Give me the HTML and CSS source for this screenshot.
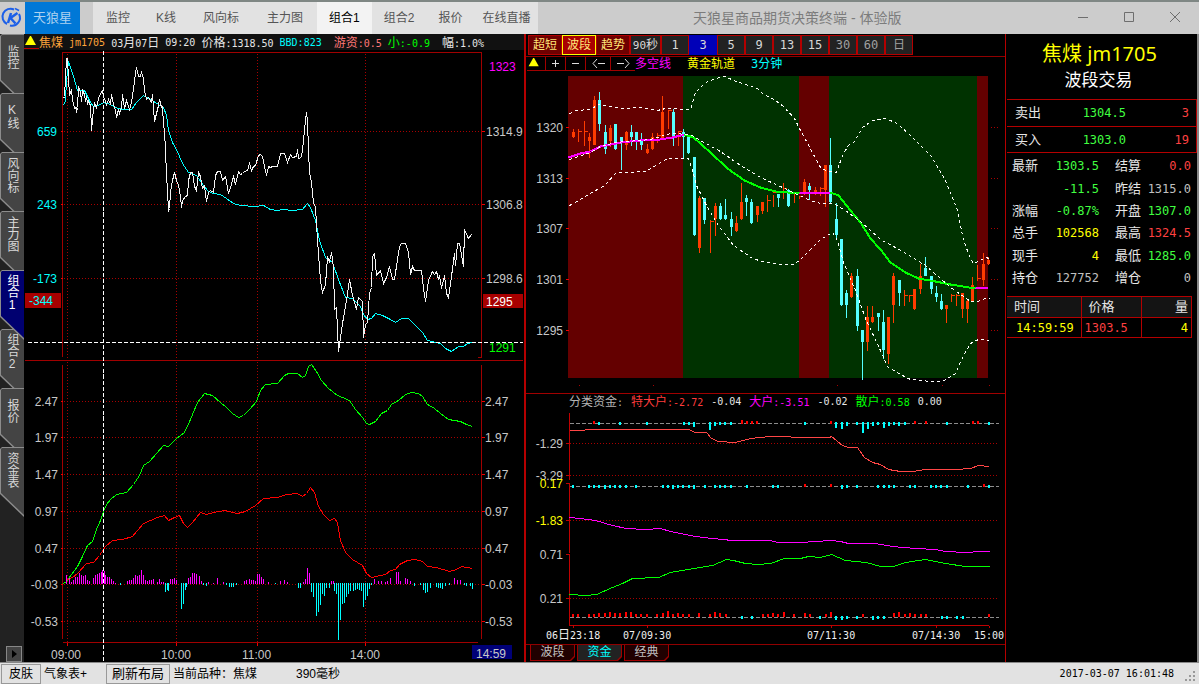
FILE: index.html
```html
<!DOCTYPE html>
<html lang="zh-CN">
<head>
<meta charset="utf-8">
<title>天狼星商品期货决策终端 - 体验版</title>
<link rel="stylesheet" href="styles.css">
</head>
<body>
<div class="app">
  <header class="titlebar">
    <svg class="logo" viewBox="0 0 24 32" aria-hidden="true">
      <g fill="none" stroke="#1c5fe8">
        <path d="M14 7.500A8 8 0 0 0 7 22" stroke-width="2"/>
        <path d="M19 12a8 8 0 0 1-9 11.500" stroke-width="2"/>
        <path d="M15 6.500l4 2" stroke-width="1.500"/>
        <path d="M11 11l-3 10M17.500 11l-7 5 5 5.500" stroke-width="2.500"/>
      </g>
    </svg>
    <button class="brand">天狼星</button>
    <nav class="menu">
      <button>监控</button>
      <button>K线</button>
      <button class="broad">风向标</button>
      <button class="broad">主力图</button>
      <button class="narrow active">组合1</button>
      <button class="narrow">组合2</button>
      <button class="narrow">报价</button>
      <button class="last">在线直播</button>
    </nav>
    <h1>天狼星商品期货决策终端 - 体验版</h1>
    <div class="window-controls">
      <button aria-label="最小化"><svg viewBox="0 0 12 12"><path d="M1 6.500h10"/></svg></button>
      <button aria-label="最大化"><svg viewBox="0 0 12 12"><path d="M1.500 1.500h9v9h-9z"/></svg></button>
      <button aria-label="关闭"><svg viewBox="0 0 12 12"><path d="M1 1l10 10M11 1L1 11"/></svg></button>
    </div>
  </header>

  <main class="workspace">
    <nav class="side">
      <button class="side-tab"><span>监控</span></button>
      <button class="side-tab"><span>K线</span></button>
      <button class="side-tab"><span>风向标</span></button>
      <button class="side-tab"><span>主力图</span></button>
      <button class="side-tab active"><span>组合1</span></button>
      <button class="side-tab"><span>组合2</span></button>
      <button class="side-tab"><span>报价</span></button>
      <button class="side-tab"><span>资金表</span></button>
      <button class="side-more" aria-label="更多"><svg viewBox="0 0 8 10"><path d="M2 1l5 4-5 4z"/></svg></button>
    </nav>

    <section class="panel trend">
      <div class="info">
        <svg class="flag" viewBox="0 0 15 16"><path d="M1 11h11L7 2H6z" fill="#ff0"/><path d="M0 14.500h15" stroke="#c00000" stroke-width="1"/></svg>
        <span class="orange">焦煤</span>
        <span class="orange n">jm1705</span>
        <span><i class="n">03</i>月<i class="n">07</i>日</span>
        <span class="n">09:20</span>
        <span>价格<i class="n">:1318.50</i></span>
        <span class="cyan n gap-after">BBD:823</span>
        <span class="rose">游资<i class="n">:0.5</i></span>
        <span class="green gap-after">小<i class="n">:-0.9</i></span>
        <span>幅<i class="n">:1.0%</i></span>
      </div>
      <svg class="chart trend-chart" viewBox="24 50 500 612">
        <g class="crisp" transform="translate(.5 .5)">
          <path class="grid" d="M67 53V359M176 53V359M257 53V359M365 53V359M67 361V641M176 361V641M257 361V641M365 361V641M63 131H481M63 204H481M63 278H481M63 401H481M63 437H481M63 474H481M63 511H481M63 548H481M63 584H481M63 621H481"/>
          <path class="axis" d="M24 360H522M62 356V52H481V357H477M62 364V638M481 364V638M62 642H477"/>
          <path class="tick" d="M60 131h2M60 204h2M60 278h2M60 401h2M60 437h2M60 474h2M60 511h2M60 548h2M60 584h2M60 621h2M481 131h3M481 204h3M481 278h3M481 401h3M481 437h3M481 474h3M481 511h3M481 548h3M481 584h3M481 621h3M67 642v3M176 642v3M257 642v3M365 642v3"/>
          <polyline class="line cyan-line" points="63,105 65,100 66,80 68,61 70,67 73,76 77,90 84,90 90,102 93,106 98,105 103,102 110,104 115,107 122,109 131,109 136,102 143,95 146,97 150,99 158,104 163,107 166,115 168,130 172,142 176,149 182,163 188,172 196,175 203,185 208,191 213,193 220,194 226,198 233,203 240,205 255,206 263,205 270,209 277,210 283,209 292,210 302,209 307,203 310,207 315,220 319,240 325,257 332,262 338,279 345,297 352,298 360,306 363,314 367,319 371,318 375,313 382,315 390,319 395,322 401,318 408,318 415,325 422,332 427,340 440,343 445,348 451,351 458,346 463,346 467,343 472,342"/>
          <polyline class="line white-line" points="63,98 64,96 66,58 67,58 68,78 69,94 71,90 72,99 74,108 76,107 76,112 77,107 78,86 80,92 81,101 82,90 84,94 85,101 86,96 87,103 88,101 90,105 91,130 93,108 94,103 96,107 98,98 100,93 102,90 103,96 105,101 106,104 108,99 110,104 111,94 113,104 115,110 116,117 118,109 119,113 121,107 122,94 124,108 126,100 128,106 129,109 131,102 133,88 135,73 136,67 138,76 140,76 141,72 143,78 144,90 146,99 148,97 151,102 152,94 154,121 156,113 158,105 159,99 161,107 162,106 163,125 164,130 165,150 166,175 167,190 168,211 169,208 170,192 172,180 174,172 176,180 178,185 180,196 181,207 182,200 185,196 187,195 188,180 190,172 192,172 194,186 196,190 198,172 200,176 202,188 204,185 206,201 208,192 210,190 213,192 215,175 217,171 220,171 222,180 225,176 228,193 230,187 233,176 235,184 238,171 240,174 242,173 244,171 247,170 249,163 251,170 253,166 255,165 258,155 260,154 262,156 264,166 266,175 268,166 270,167 272,166 277,166 280,153 284,153 287,162 290,154 292,157 296,156 297,149 298,158 301,157 303,140 305,120 306,112 307,120 308,150 309,172 311,182 313,202 315,207 317,240 320,280 322,292 325,284 327,257 329,261 331,252 333,267 334,309 336,307 338,351 342,323 346,300 349,279 352,295 356,309 358,297 362,301 363,337 365,324 367,322 369,293 371,287 372,256 374,253 376,275 380,270 383,283 386,277 389,266 392,279 394,279 399,246 401,243 405,243 408,252 410,274 412,266 414,270 421,270 423,288 425,301 428,280 432,271 434,274 436,271 438,279 439,275 441,288 444,275 446,293 448,297 451,276 454,253 455,265 457,243 459,243 463,266 464,229 468,238 471,234"/>
          <polyline class="line green-line" points="63,583 66,581 71,574 77,566 82,556 87,545 92,541 96,529 100,520 103,511 106,504 110,499 116,494 126,492 133,484 139,475 143,465 149,461 156,453 163,445 168,446 176,438 184,432 190,419 197,402 204,393 212,395 220,402 226,407 232,413 238,417 243,415 249,409 256,401 260,390 265,384 277,383 284,375 288,373 297,373 302,377 305,375 308,366 311,364 316,371 321,380 328,388 337,395 342,397 349,400 355,409 362,417 366,423 369,424 375,421 381,413 387,410 391,404 398,400 405,394 411,392 418,393 422,396 427,404 434,408 440,413 448,419 460,421 466,424 472,426"/>
          <polyline class="line red-line" points="67,579 72,577 77,573 86,563 93,562 99,555 105,546 112,540 122,539 132,536 137,530 143,523 150,520 157,517 164,515 168,520 174,517 179,515 183,523 187,527 192,522 200,512 206,514 213,512 224,510 237,513 245,511 255,505 263,498 277,497 286,494 297,493 302,496 306,493 310,487 314,492 318,506 323,514 329,520 334,518 337,522 340,540 345,552 352,559 362,565 366,573 371,577 385,574 390,570 395,569 399,564 407,560 415,559 422,561 427,566 436,567 449,571 456,569 461,566 472,568"/>
          <path class="line magenta-line" d="M66 583v-9M69 583v-6M71 583v-2M73 583v-4M75 583v-7M77 583v-7M79 583v-11M81 583v-9M83 583v-8M85 583v-9M87 583v-4M89 583v-3M93 583v-6M95 583v-9M97 583v-10M99 583v-11M101 583v-12M102 583v-14M104 583v-13M105 583v-9M107 583v-7M109 583v-7M111 583v-5M113 583v-3M115 583v-1M127 583v-3M129 583v-4M131 583v-4M133 583v-6M135 583v-9M137 583v-8M139 583v-9M141 583v-14M143 583v-9M145 583v-4M147 583v-3M149 583v-4M151 583v-4M153 583v-5M157 583v-2M159 583v-5M161 583v-2M163 583v-2M170 583v-5M172 583v-5M174 583v-6M176 583v-4M188 583v-6M190 583v-7M192 583v-11M194 583v-11M196 583v-10M199 583v-8M201 583v-3M208 583v-2M213 583v-1M217 583v-6M223 583v-2M244 583v-3M246 583v-4M249 583v-5M251 583v-4M253 583v-4M255 583v-3M257 583v-10M259 583v-10M261 583v-7M263 583v-5M268 583v-2M280 583v-3M284 583v-4M287 583v-2M303 583v-2M305 583v-5M307 583v-16M309 583v-11M331 583v-3M333 583v-3M374 583v-5M378 583v-3M381 583v-3M385 583v-2M387 583v-3M390 583v-6M396 583v-12M398 583v-12M400 583v-3M405 583v-6M407 583v-5M410 583v-3M454 583v-6M457 583v-4M460 583v-4"/>
          <path class="line cyan-line" d="M120 582v2M165 582v9M167 582v7M168 582v8M181 582v26M183 582v21M185 582v7M186 582v4M203 582v2M206 582v3M226 582v2M229 582v4M231 582v4M233 582v4M236 582v2M275 582v1M298 582v5M300 582v5M311 582v9M313 582v14M316 582v33M318 582v29M320 582v22M322 582v11M324 582v13M326 582v5M329 582v5M334 582v8M336 582v11M338 582v57M340 582v37M342 582v21M344 582v20M346 582v14M348 582v11M350 582v8M353 582v8M355 582v7M357 582v6M359 582v7M361 582v8M363 582v24M365 582v17M367 582v13M369 582v6M371 582v2M414 582v3M420 582v2M423 582v7M425 582v10M427 582v9M430 582v5M436 582v4M438 582v5M440 582v5M442 582v6M445 582v3M449 582v2M464 582v2M466 582v3M470 582v3M472 582v6"/>
          <path class="cross" d="M103 50V661M27 342H522"/>
        </g>
        <rect x="25" y="293" width="36" height="15" fill="#a80000"/>
        <rect x="483" y="294" width="40" height="14" fill="#a80000"/>
        <rect x="472" y="645" width="40" height="14" fill="#000078"/>
        <g class="label cyan">
          <text x="37" y="136">659</text><text x="37" y="209">243</text><text x="33" y="283">-173</text><text x="29" y="305">-344</text>
        </g>
        <g class="label end">
          <text x="58" y="406">2.47</text><text x="58" y="442">1.97</text><text x="58" y="479">1.47</text><text x="58" y="516">0.97</text><text x="58" y="553">0.47</text><text x="58" y="589">-0.03</text><text x="58" y="626">-0.53</text>
        </g>
        <g class="label">
          <text x="489" y="71" class="magenta">1323</text>
          <text x="486" y="136">1314.9</text><text x="486" y="209">1306.8</text><text x="486" y="283">1298.6</text>
          <text x="486" y="306" class="white">1295</text><text x="489" y="352" class="green">1291</text>
          <text x="485" y="406">2.47</text><text x="485" y="442">1.97</text><text x="485" y="479">1.47</text><text x="485" y="516">0.97</text><text x="485" y="553">0.47</text><text x="485" y="589">-0.03</text><text x="485" y="626">-0.53</text>
          <text x="51" y="659">09:00</text><text x="161" y="659">10:00</text><text x="242" y="659">11:00</text><text x="350" y="659">14:00</text><text x="476" y="658">14:59</text>
        </g>
      </svg>
    </section>

    <section class="panel candle">
      <div class="periods">
        <button class="hot">超短</button><button class="hot chosen">波段</button><button class="hot">趋势</button><button class="sec"><i class="m">90</i>秒</button><button class="m">1</button><button class="m on">3</button><button class="m">5</button><button class="m">9</button><button class="m">13</button><button class="m">15</button><button class="m dim">30</button><button class="m dim">60</button><button class="dim">日</button>
      </div>
      <div class="tools">
        <svg class="flag" viewBox="0 0 18 14"><path d="M1 10h11L7 1H6z" fill="#ff0"/></svg>
        <button aria-label="放大"><svg viewBox="0 0 9 9"><path d="M1 4.500h7M4.500 1v7"/></svg></button>
        <button aria-label="缩小"><svg viewBox="0 0 9 9"><path d="M1 4.500h7"/></svg></button>
        <button class="move" aria-label="左移"><svg viewBox="0 0 13 9"><path d="M5 0L1 4.500 5 9M6 4.500h7"/></svg></button>
        <button class="move" aria-label="右移"><svg viewBox="0 0 13 9"><path d="M0 4.500h7M8 0l4 4.500L8 9"/></svg></button>
        <span class="tool-name magenta">多空线</span>
        <span class="tool-name yellow">黄金轨道</span>
        <span class="tool-name cyan"><i class="m">3</i>分钟</span>
      </div>
      <svg class="chart candle-chart" viewBox="526 72 479 321">
        <path d="M568 76h115v302H568zM799 76h30v302h-30zM977 76h11v302h-11z" fill="#640000"/>
        <path d="M683 76h116v302H683zM829 76h148v302H829z" fill="#003200"/>
        <g class="crisp" transform="translate(.5 .5)">
          <path class="tick" d="M565 127h3M565 178h3M565 228h3M565 279h3M565 330h3"/>
          <path class="grid" d="M990 127h8M990 178h8M990 228h8M990 279h8M990 330h8M578 385h1M652 385h1M836 385h1M941 385h1M988 385h1"/>
          <path class="line up" d="M573 128V137M578 128V141M584 120V145M589 132V157M594 95V144M610 124V146M626 130V149M647 143V153M652 132V149M657 132V142M662 95V138M668 109V128M678 130V145M699 195V252M710 219V252M715 202V235M736 215V231M741 182V219M757 205V221M762 201V213M767 194V211M773 194V206M783 182V198M794 191V202M799 195V198M804 178V194M815 186V194M820 186V195M825 164V206M851 272V297M867 305V350M872 305V322M888 316V363M893 272V322M904 289V305M909 295V301M914 288V309M920 263V293M946 304V322M951 293V301M956 293V305M962 292V317M967 299V322M972 276V301M977 264V280M983 252V285M988 256V264M577 131h4M583 131h4M656 135h4M667 110h4M677 131h4M709 221h4M766 200h4M772 192h4M782 188h4M793 192h4M798 196h4M819 188h4M903 295h4M908 295h4M950 295h4M955 295h4M976 278h4"/>
          <path class="body up" d="M573 131V136M589 136V140M594 99V144M610 127V140M626 131V144M647 148V152M652 136V148M662 111V137M699 197V247M715 205V218M736 222V230M741 201V218M757 205V214M762 201V210M804 181V193M815 189V193M825 164V189M851 275V296M867 316V341M872 316V321M888 316V353M893 275V304M914 288V308M920 275V288M946 304V308M962 292V308M967 300V308M972 284V300M983 263V279M988 259V263"/>
          <path class="line down" d="M599 91V130M605 124V153M615 123V149M621 136V169M631 124V145M636 131V149M641 132V149M673 108V145M683 128V157M688 136V153M694 156V235M704 197V223M720 202V219M725 198V219M731 211V235M746 194V215M751 198V223M778 193V206M788 188V206M809 182V199M830 137V202M836 202V239M841 238V305M846 289V317M857 268V330M862 329V379M878 312V330M883 309V358M899 279V305M925 256V275M931 275V293M936 285V301M941 293V309"/>
          <path class="body down" d="M599 99V123M605 131V148M615 123V148M621 136V140M631 131V136M636 131V140M641 140V144M673 111V136M683 131V136M688 136V152M694 156V234M704 197V219M720 205V218M725 214V218M731 218V226M746 197V201M751 201V222M778 193V197M788 189V205M809 185V189M830 164V201M836 218V234M841 238V304M846 292V304M857 275V325M862 329V341M878 312V316M883 321V349M899 279V292M925 267V275M931 275V288M936 292V296M941 300V308"/>
          <path class="thick magenta-line" d="M568 157L580 153 590 151 600 146 620 142 640 140 660 139 672 137 684 134M799 193L830 192M975 288L988 287"/>
          <path class="thick green-line" d="M684 134L693 137 710 152 727 168 744 180 760 187 775 191 799 193M830 192L838 195 850 210 860 222 870 238 880 249 890 262 905 272 918 278 935 281 950 284 975 288"/>
          <g class="band">
            <polyline points="569,113 576,110 590,109 598,104 612,106 620,108 640,107 657,110 665,108 690,109 693,99 695,92 705,82 715,78 725,76 733,80 745,84 757,88 762,93 775,100 783,106 794,118 799,128 806,141 820,167 825,170 836,172 842,155 848,145 853,142 862,127 872,120 885,118 897,123 910,135 930,155 945,180 957,210 963,240 970,258 973,263 980,260 985,257 989,258"/>
            <polyline points="569,159 590,152 600,146 615,142 650,139 670,133 690,134 700,140 720,151 740,165 760,177 780,186 799,195 810,200 820,203 833,203 845,210 860,221 880,239 895,247 910,256 925,265 940,278 950,287 963,296 970,301 977,301 985,298 989,298"/>
            <polyline points="569,205 580,199 590,193 604,185 615,173 622,172 645,171 655,165 667,158 688,158 692,170 696,185 706,205 718,225 733,245 752,258 762,261 780,264 793,264 800,259 820,239 832,232 837,240 843,262 855,290 865,318 880,350 887,366 900,374 910,379 930,381 942,381 955,373 963,355 970,343 978,339 989,340"/>
          </g>
        </g>
        <g class="label end">
          <text x="563" y="132">1320</text><text x="563" y="183">1313</text><text x="563" y="233">1307</text><text x="563" y="284">1301</text><text x="563" y="335">1295</text>
        </g>
      </svg>
      <div class="legend">
        <span class="gray">分类资金<i class="n">:</i></span>
        <span class="red">特大户<i class="n">:-2.72</i></span>
        <span class="n">-0.04</span>
        <span class="magenta">大户<i class="n">:-3.51</i></span>
        <span class="n">-0.02</span>
        <span class="green">散户<i class="n">:0.58</i></span>
        <span class="n">0.00</span>
      </div>
      <svg class="chart fund-chart" viewBox="526 411 479 233">
        <g class="crisp" transform="translate(.5 .5)">
          <path class="grid" d="M569 443H998M569 475H998M569 520H998M569 598H998"/>
          <path class="axis bright" d="M569 412V479M565 483H569V552M565 554H569V625H988M565 443h4M565 475h4M565 520h4M565 598h4M573 625v2M647 625v2M831 625v2M936 625v2M989 625v2"/>
          <path class="zero" d="M569 423H998M569 486H998M569 617H998"/>
          <polyline class="line coral-line" points="569,430 580,430 590,429 689,429 694,432 706,432 711,438 718,441 735,442 750,438 770,436 785,436 795,437 829,437 831,436 842,445 848,447 857,447 864,457 872,462 880,464 888,469 900,471 912,471 925,469 955,469 970,468 978,465 989,466"/>
          <polyline class="line magenta-line" points="569,517 580,518 595,520 612,525 626,528 645,529 660,528 670,531 685,534 695,536 712,538 732,540 770,540 777,542 800,542 830,540 840,541 848,543 875,543 892,546 915,548 935,549 945,551 965,552 980,551 989,551"/>
          <polyline class="line green-line" points="569,594 585,595 596,594 612,587 622,583 632,578 658,577 670,572 688,569 700,567 712,565 726,559 733,560 745,563 757,564 770,563 784,558 800,558 808,556 820,557 831,554 845,560 866,562 880,566 893,566 905,562 925,559 945,563 965,566 989,566"/>
        </g>
        <path class="bar cyan-line" d="M599 422v3M620 422v3M647 422v3M684 422v3M689 422v3M694 422v5M710 422v8M715 422v4M720 422v3M725 422v3M731 422v3M805 422v3M836 422v6M842 422v7M847 422v4M857 422v3M863 422v11M868 422v7M873 422v4M878 422v3M884 422v6M889 422v4M894 422v3M899 422v4M905 422v3M947 422v3M989 422v3M573 485v3M589 485v3M594 485v3M599 485v3M605 485v4M610 485v3M615 485v3M620 485v3M626 485v3M636 485v3M663 485v3M668 485v3M673 485v4M678 485v3M683 485v3M689 485v3M694 485v4M705 485v3M715 485v3M720 485v3M725 485v3M731 485v3M747 485v3M773 485v3M778 485v3M842 485v4M847 485v3M857 485v3M878 485v3M884 485v3M889 485v3M894 485v3M910 485v3M915 485v3M931 485v3M936 485v3M941 485v3M947 485v3M968 485v3M989 485v3M742 616v3M752 616v3M820 616v3M836 616v4M842 616v4M847 616v3M857 616v3M873 616v4M878 616v3M884 616v3M942 616v3M947 616v3M957 616v3M963 616v3"/>
        <path class="bar red-line" d="M594 424v-3M742 424v-4M747 424v-3M752 424v-3M757 424v-3M831 424v-3M915 424v-3M926 424v-3M973 424v-3M978 424v-3M805 487v-3M831 487v-3M984 487v-3M573 617v-3M578 617v-3M589 617v-3M594 617v-3M599 617v-4M605 617v-4M610 617v-5M615 617v-4M620 617v-4M626 617v-5M631 617v-5M636 617v-3M641 617v-3M647 617v-3M657 617v-3M663 617v-4M668 617v-6M673 617v-3M678 617v-4M683 617v-3M689 617v-3M699 617v-4M710 617v-3M715 617v-5M720 617v-4M726 617v-3M763 617v-3M768 617v-3M773 617v-4M778 617v-3M784 617v-5M794 617v-3M805 617v-4M810 617v-3M826 617v-3M831 617v-5M863 617v-3M894 617v-4M899 617v-5M905 617v-3M910 617v-4M915 617v-3M921 617v-3M926 617v-3M989 617v-3"/>
        <g class="label end">
          <text x="563" y="448">-1.29</text><text x="563" y="480">-3.29</text>
          <text x="563" y="488" class="yellow">0.17</text><text x="563" y="525" class="yellow">-1.83</text>
          <text x="563" y="559">0.71</text><text x="563" y="603">0.21</text>
        </g>
        <g class="time">
          <text x="546" y="639">06<tspan class="cjk">日</tspan>23:18</text><text x="623" y="639">07/09:30</text><text x="807" y="639">07/11:30</text><text x="912" y="639">07/14:30</text><text x="974" y="639">15:00</text>
        </g>
      </svg>
      <div class="bottom-tabs">
        <button><span>波段</span></button>
        <button class="active"><span>资金</span></button>
        <button><span>经典</span></button>
      </div>
    </section>

    <aside class="quote">
      <div class="quote-head">
        <h2>焦煤 jm1705</h2>
        <p>波段交易</p>
      </div>
      <dl class="book">
        <dt>卖出</dt><dd class="lime">1304.5</dd><dd class="coral">3</dd>
      </dl>
      <dl class="book second">
        <dt>买入</dt><dd class="lime">1303.0</dd><dd class="coral">19</dd>
      </dl>
      <dl class="facts">
        <dt>最新</dt><dd class="lime">1303.5</dd><dt>结算</dt><dd class="coral">0.0</dd>
        <dt></dt><dd class="lime">-11.5</dd><dt>昨结</dt><dd>1315.0</dd>
        <dt>涨幅</dt><dd class="lime">-0.87%</dd><dt>开盘</dt><dd class="lime">1307.0</dd>
        <dt>总手</dt><dd class="yellow">102568</dd><dt>最高</dt><dd class="coral">1324.5</dd>
        <dt>现手</dt><dd class="yellow">4</dd><dt>最低</dt><dd class="lime">1285.0</dd>
        <dt>持仓</dt><dd>127752</dd><dt>增仓</dt><dd>0</dd>
      </dl>
      <table class="ticks">
        <thead><tr><th>时间</th><th>价格</th><th>量</th></tr></thead>
        <tbody><tr><td class="yellow">14:59:59</td><td class="coral">1303.5</td><td class="yellow">4</td></tr></tbody>
      </table>
    </aside>
  </main>

  <footer class="status">
    <button class="skin">皮肤</button>
    <span class="weather">气象表+</span>
    <button class="layout">刷新布局</button>
    <span class="current">当前品种：焦煤</span>
    <span class="delay">390毫秒</span>
    <time class="n">2017-03-07 16:01:48</time>
    <svg class="grip" viewBox="0 0 14 14"><path d="M10 1h2v2h-2zM6 5h2v2H6zM10 5h2v2h-2zM2 9h2v2H2zM6 9h2v2H6zM10 9h2v2h-2z"/></svg>
  </footer>
</div>
</body>
</html>
```
FILE: styles.css
```css
* { box-sizing: border-box; }

body {
  margin: 0;
  background: #000;
  color: #e6e6e6;
  font: 12px/16px "Liberation Sans", "Noto Sans CJK SC", sans-serif;
}

button {
  margin: 0;
  padding: 0;
  border: 0;
  background: none;
  color: inherit;
  font: inherit;
  white-space: nowrap;
}

h1, h2, p, dl, dd { margin: 0; font-weight: normal; }

i { font-style: normal; }

.app {
  display: flex;
  flex-direction: column;
  height: 100vh;
  min-height: 480px;
  overflow: hidden;
}

.n, .m {
  font-family: "DejaVu Sans Mono", "Liberation Mono", monospace;
  font-size: 10px;
}
.m { font-size: 12px; }

.cyan { color: #0ff; fill: #0ff; }
.green { color: #0f0; fill: #0f0; }
.magenta { color: #f0f; fill: #f0f; }
.yellow { color: #ff0; fill: #ff0; }
.white { color: #fff; fill: #fff; }
.orange { color: #ffa53c; }
.rose { color: #ff7878; }
.red { color: #ff3c3c; }
.gray { color: #b4b4b4; }
.lime { color: #40ff40; }
.coral { color: #ff4040; }

/* Title bar */
.titlebar {
  display: flex;
  flex: none;
  height: 34px;
  border-top: 2px solid #7f8784;
  background: #ccc;
}
.logo { flex: none; width: 25px; height: 32px; padding-right: 1px; }
.brand {
  width: 55px;
  margin-right: 13px;
  background: #0078d7;
  color: #aed2f0;
  font-size: 13px;
}
.menu { display: flex; background: #e2e2e2; color: #555; }
.menu button { padding: 0 13px; }
.menu .broad { padding: 0 14px; }
.menu .narrow { padding: 0 12px; }
.menu .last { padding: 0 8px; }
.menu .active { background: #f3f3f3; color: #000; }
.titlebar h1 {
  flex: 1;
  align-self: center;
  padding-right: 4px;
  color: #7c7c7c;
  font-size: 14px;
  text-align: center;
  white-space: nowrap;
}
.window-controls { display: flex; padding-right: 1px; }
.window-controls button { display: grid; place-items: center; width: 46px; height: 30px; }
.window-controls svg { width: 12px; height: 12px; fill: none; stroke: #6e6e6e; }

/* Work area */
.workspace {
  display: grid;
  flex: 1;
  grid-template-columns: 24px minmax(0, 502fr) minmax(0, 480fr) 193px;
  min-height: 0;
}

.side {
  display: flex;
  flex-direction: column;
  background: #222;
}
.side-tab {
  position: relative;
  flex: none;
  width: 24px;
  height: 70px;
  margin-bottom: -11px;
  background: #8c8c8c;
  color: #d8d8d8;
  clip-path: polygon(2px 0, 100% 0, 100% 100%, 0 47px, 0 2px);
}
.side-tab::before {
  content: "";
  position: absolute;
  inset: 1px 0 0 1px;
  background: #444;
  clip-path: polygon(1px 0, 100% 0, 100% 67px, 0 45px, 0 1px);
}
.side-tab span {
  position: relative;
  display: flex;
  align-items: center;
  width: 24px;
  height: 46px;
  margin-bottom: 24px;
  justify-content: center;
  line-height: 24px;
  text-orientation: upright;
  writing-mode: vertical-rl;
}
.side-tab.active { z-index: 1; color: #fff; }
.side-tab.active::before { background: #000070; }
.side-more {
  display: grid;
  place-items: center;
  width: 16px;
  height: 16px;
  margin: auto 2px 0 auto;
  border: 1px solid #888;
  background: #444;
}
.side-more svg { width: 8px; height: 10px; }

.panel { display: flex; flex-direction: column; min-width: 0; }
.trend { border-right: 2px solid #b40000; }
.candle { border-right: 1px solid #b40000; }

.info {
  display: flex;
  flex: none;
  gap: 6px;
  height: 16px;
  background: #111;
  line-height: 18px;
  white-space: nowrap;
  overflow: hidden;
}
.info .flag { flex: none; width: 15px; height: 16px; margin-right: -6px; }
.info .gap-after { margin-right: 6px; }

/* Charts */
.chart { display: block; width: 100%; min-height: 0; }
.trend-chart { flex: 612 1 0; }
.candle-chart { flex: 321 1 0; }
.fund-chart { flex: 233 1 0; }
.chart path, .chart polyline { stroke-width: 1; }
.crisp { shape-rendering: crispEdges; fill: none; }
.grid { stroke: #a80000; stroke-dasharray: 1 2; }
.axis { stroke: #a00000; }
.axis.bright { stroke: #c00000; }
.tick { stroke: #f00000; }
.cross { stroke: #fff; stroke-dasharray: 4 2; }
.zero { stroke: #8c8c8c; stroke-dasharray: 4 2; }
.line, .thick { fill: none; }
.chart .thick { stroke-width: 2; }
.chart .body { stroke-width: 3; }
.chart .bar { stroke-width: 2; shape-rendering: crispEdges; }
.cyan-line { stroke: #0ff; }
.white-line { stroke: #f4f4f4; }
.green-line { stroke: #0f0; }
.red-line { stroke: #f00; }
.coral-line { stroke: #ff4646; }
.magenta-line { stroke: #f0f; }
.up { stroke: #ff3c00; }
.down { stroke: #5ff; }
.band { stroke: #fff; stroke-dasharray: 3 3; }
.label { font: 12px "Liberation Sans", sans-serif; }
.label:not(.cyan) { fill: #c8c8c8; }
.end { text-anchor: end; }
.time { fill: #f0f0f0; font: 10px "DejaVu Sans Mono", monospace; }
.time .cjk { font: 12px "Noto Sans CJK SC", sans-serif; }

/* Candle panel controls */
.periods { display: flex; flex: none; height: 22px; padding: 1px 0 1px 2px; }
.periods button {
  width: 28px;
  border: 1px solid #b40000;
  background: #222;
  color: #d8d8d8;
}
.periods .hot { width: 34px; background: #6e0000; color: #ffe678; }
.periods .chosen { border-color: #ff0; background: #aa0000; }
.periods .sec { width: 31px; }
.periods .sec .m { font-size: 11px; }
.periods .on { border-color: #0000b8; background: #0000b8; }
.periods .dim { color: #a0a0a0; }

.tools {
  display: flex;
  flex: none;
  height: 16px;
  padding-left: 1px;
  border-top: 1px solid #900000;
  white-space: nowrap;
}
.tools .flag { width: 18px; height: 14px; border-bottom: 1px solid #a00000; }
.tools button {
  display: grid;
  place-items: center;
  width: 20px;
  height: 14px;
  border: 1px solid #a00000;
  border-top: 0;
  border-right: 0;
}
.tools .move { width: 25px; }
.tools button svg { height: 9px; fill: none; stroke: #ddd; }
.tool-name { margin-right: 16px; line-height: 14px; }

.legend {
  display: flex;
  flex: none;
  gap: 8px;
  height: 18px;
  padding-left: 43px;
  border-top: 1px solid #a00000;
  white-space: nowrap;
}

.bottom-tabs {
  display: flex;
  flex: none;
  gap: 2px;
  height: 18px;
  padding-left: 4px;
  border-top: 1px solid #900000;
}
.bottom-tabs button {
  width: 45px;
  height: 16px;
  padding: 0 1px 1px;
  background: #a00000;
  clip-path: polygon(0 0, 100% 0, 100% 12px, 41px 100%, 0 100%);
}
.bottom-tabs span {
  display: block;
  height: 15px;
  background: #200000;
  clip-path: polygon(0 0, 100% 0, 100% 11px, 39px 100%, 0 100%);
  color: #c0c0c0;
  line-height: 15px;
}
.bottom-tabs .active span { background: #222; color: #0ff; }

/* Quote */
.quote { border-right: 2px solid #888; }
.quote-head { height: 65px; padding-top: 6px; text-align: center; }
.quote-head h2 {
  padding-right: 4px;
  color: #ff0;
  font: 20px/28px "Noto Sans", "Noto Sans CJK SC", sans-serif;
}
.quote-head p { padding-right: 6px; color: #fff; font-size: 17px; line-height: 26px; }
.book {
  display: grid;
  grid-template-columns: 48px 63px 1fr;
  align-items: center;
  height: 28px;
  margin-left: 1px;
  padding: 0 7px 0 8px;
  border: 1px solid #b40000;
  border-left: 0;
}
.book.second { height: 26px; border-top: 0; }
dt { font-size: 13px; white-space: nowrap; }
dd {
  color: #c0c0c0;
  font: 12px/16px "DejaVu Sans Mono", monospace;
  text-align: right;
}
dd.lime { color: #40ff40; }
dd.coral { color: #ff4040; }
dd.yellow { color: #ff0; }
.facts {
  display: grid;
  grid-template-columns: 36px 51px 1fr 48px;
  grid-template-rows: 22px 24px 20px 24px 21px 24px;
  align-items: center;
  padding: 2px 6px 0;
}
.facts dt:nth-of-type(even) { padding-left: 16px; }
.ticks {
  width: calc(100% - 6px);
  margin: 6px 0 0 1px;
  border-collapse: collapse;
  table-layout: fixed;
}
.ticks th, .ticks td {
  height: 20px;
  padding: 0 3px 0 7px;
  border: 1px solid #b40000;
  border-left: 0;
  font-weight: normal;
  text-align: left;
}
.ticks th { height: 21px; background: #141414; font-size: 13px; }
.ticks th:first-child { width: 74px; }
.ticks th:nth-child(2) { width: 60px; }
.ticks td:nth-child(2) { padding-left: 3px; }
.ticks th:last-child, .ticks td:last-child { text-align: right; }
.ticks td { font: 12px/16px "DejaVu Sans Mono", monospace; }
.ticks td:first-child { padding-left: 9px; }

/* Status bar */
.status {
  display: flex;
  flex: none;
  align-items: center;
  height: 22px;
  padding-left: 1px;
  border-top: 1px solid #888;
  background: #e2e2e2;
  color: #000;
  white-space: nowrap;
}
.status button { height: 20px; border: 1px solid #999; }
.skin { width: 40px; margin-right: 3px; }
.weather { width: 62px; }
.status .layout { width: 64px; margin-right: 3px; font-size: 13px; }
.current { width: 123px; }
.status time { margin-left: auto; margin-right: 9px; }
.grip { width: 14px; height: 14px; align-self: flex-end; margin-right: 2px; fill: #999; }
```
